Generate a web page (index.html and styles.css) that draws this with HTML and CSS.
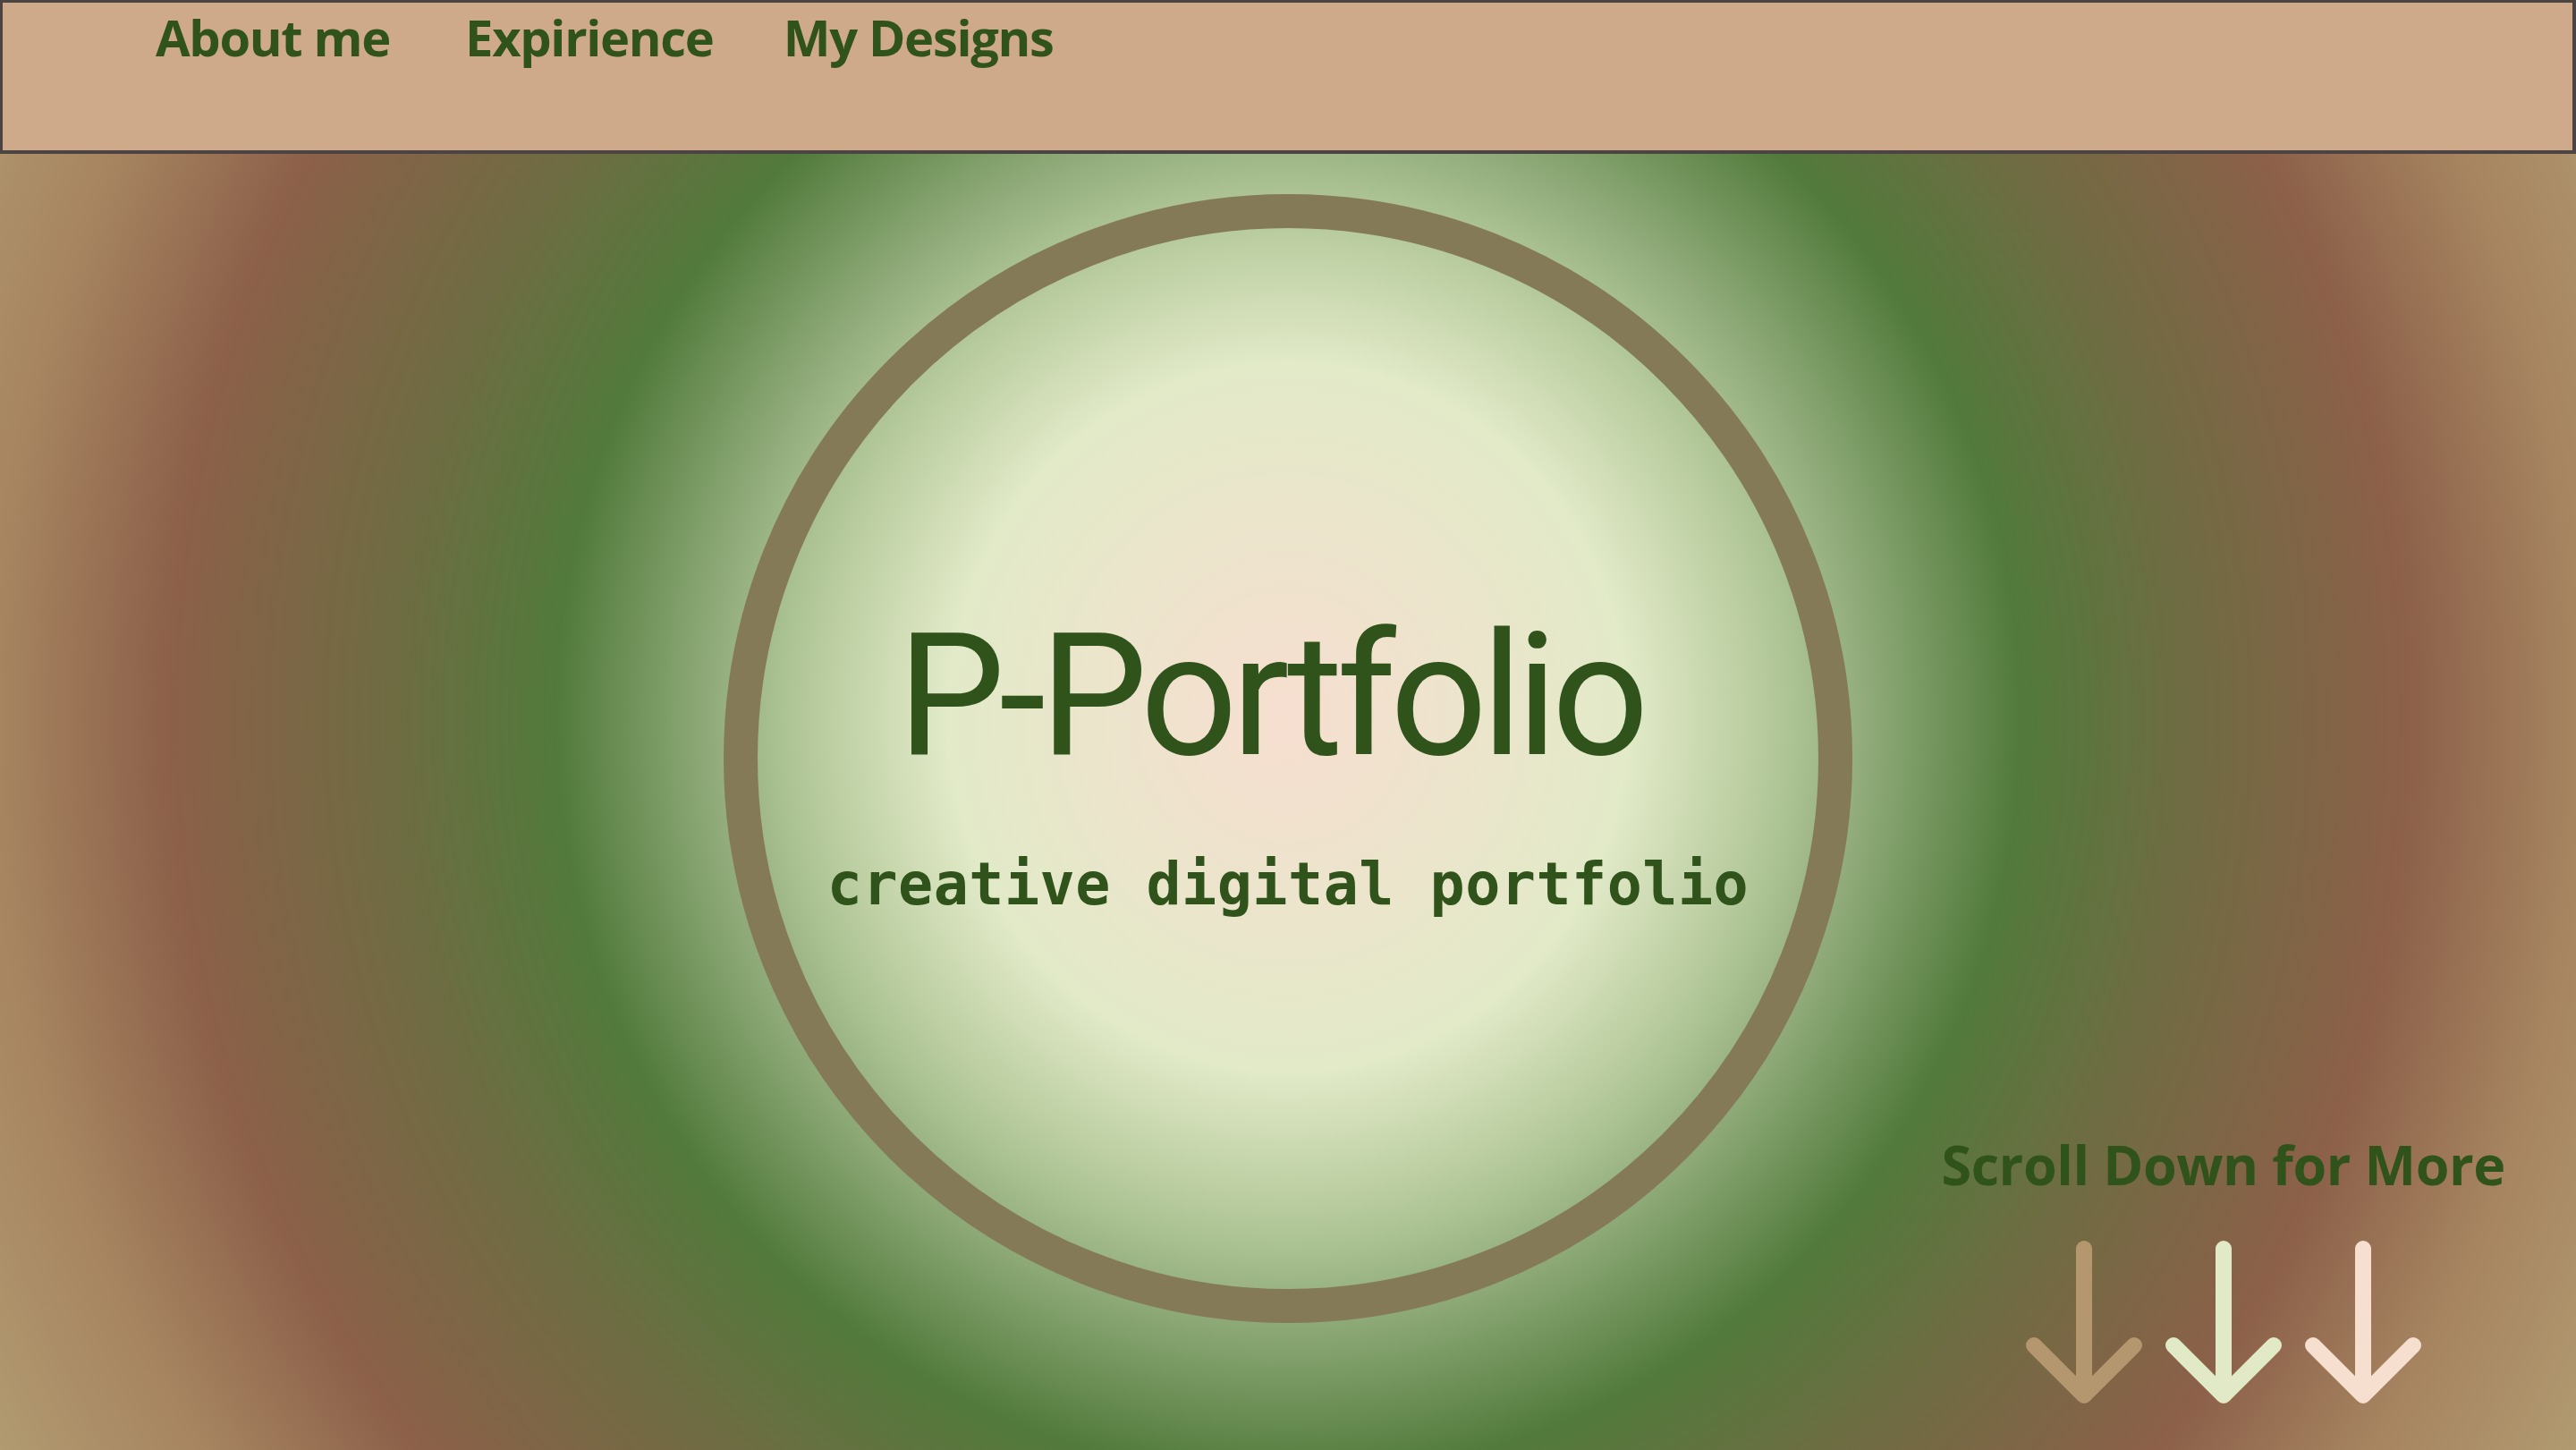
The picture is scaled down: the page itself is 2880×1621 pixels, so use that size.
FILE: index.html
```html
<!DOCTYPE html>
<html lang="en">
<head>
<meta charset="utf-8">
<title>P-Portfolio</title>
<link rel="stylesheet" href="styles.css">
</head>
<body>
<nav class="topnav">
  <a class="nav-link nav-about" href="#about">About me</a>
  <a class="nav-link nav-exp" href="#experience">Expirience</a>
  <a class="nav-link nav-designs" href="#designs">My Designs</a>
</nav>
<main class="hero">
  <div class="hero-side"></div>
  <div class="ring">
    <h1 class="title">P-Portfolio</h1>
    <p class="subtitle">creative digital portfolio</p>
  </div>
  <div class="scroll-hint">
    <p class="scroll-text">Scroll Down for More</p>
    <div class="arrows">
      <svg class="arrow arrow-tan" width="130" height="200" viewBox="0 0 130 200"><path d="M65 17 V181 M9 125 L65 181 L121 125" fill="none" stroke-width="18" stroke-linecap="round" stroke-linejoin="round"/></svg>
      <svg class="arrow arrow-sage" width="130" height="200" viewBox="0 0 130 200"><path d="M65 17 V181 M9 125 L65 181 L121 125" fill="none" stroke-width="18" stroke-linecap="round" stroke-linejoin="round"/></svg>
      <svg class="arrow arrow-blush" width="130" height="200" viewBox="0 0 130 200"><path d="M65 17 V181 M9 125 L65 181 L121 125" fill="none" stroke-width="18" stroke-linecap="round" stroke-linejoin="round"/></svg>
    </div>
  </div>
</main>
</body>
</html>
```
FILE: styles.css
```css
* { box-sizing: border-box; }
html, body { margin: 0; padding: 0; }
body {
  min-height: 100vh;
  overflow: hidden;
  font-family: "Open Sans", "Liberation Sans", sans-serif;
  color: #30531b;
  background: radial-gradient(ellipse 1000px 1040px at 50% 802px,
    #f7ded0 0px,
    #e2eac8 380px,
    #c0d1a6 500px,
    #afc596 555px,
    #94ae7d 635px,
    #7c9c66 700px,
    #527a3c 818px,
    #6e6c42 1000px,
    #8c6049 1250px,
    #a68460 1440px,
    #b19a70 1640px) no-repeat;
  background-color: #b19a70;
}
.topnav {
  height: 172px;
  display: flex;
  align-items: flex-start;
  padding-left: 171px;
  background: #cea98a;
  border: 3px solid #4b4443;
  border-bottom-width: 4px;
  border-right-width: 4px;
}
.nav-link {
  font-family: "Open Sans", sans-serif;
  font-weight: 700;
  font-size: 56px;
  line-height: 76px;
  letter-spacing: -1.3px;
  color: #30531b;
  text-decoration: none;
}
.nav-exp { margin-left: 84px; }
.nav-designs { margin-left: 78px; }

.hero {
  height: calc(100vh - 172px);
  display: grid;
  grid-template-columns: 1fr 1262px 1fr;
  padding-top: 45px;
}
.ring {
  width: 1262px;
  height: 1262px;
  border: 38px solid #857a58;
  border-radius: 50%;
  display: flex;
  flex-direction: column;
  align-items: center;
  padding-top: 423px;
}
.title {
  margin: 0;
  padding-right: 40px;
  font-family: Roboto, "Liberation Sans", sans-serif;
  font-weight: 400;
  font-size: 191px;
  line-height: 200px;
  letter-spacing: -7px;
  color: #30531b;
}
.subtitle {
  margin: 71px 0 0;
  font-family: "DejaVu Sans Mono", "Liberation Mono", monospace;
  font-weight: 700;
  font-size: 65px;
  line-height: 80px;
  letter-spacing: 0.5px;
  color: #30531b;
}
.scroll-hint {
  align-self: end;
  justify-self: end;
  margin-right: 79px;
  margin-bottom: 42px;
  display: flex;
  flex-direction: column;
  align-items: center;
}
.scroll-text {
  margin: 0;
  font-family: "Open Sans", sans-serif;
  font-weight: 700;
  font-size: 61px;
  line-height: 80px;
  letter-spacing: -0.4px;
  color: #30531b;
}
.arrows {
  display: flex;
  gap: 26px;
  margin-top: 37px;
}
.arrow { display: block; }
.arrow-tan { stroke: #b4976f; }
.arrow-sage { stroke: #e1e9c7; }
.arrow-blush { stroke: #f7dfcf; }
```
